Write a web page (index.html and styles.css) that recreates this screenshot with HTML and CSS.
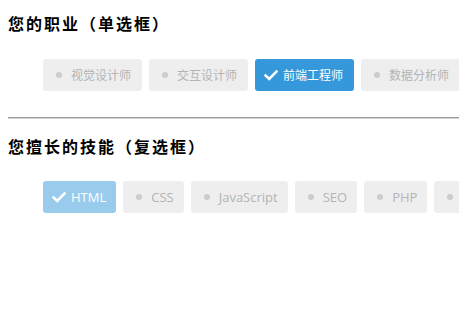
FILE: index.html
```html
<!DOCTYPE html>
<html lang="zh-CN">
<head>
<meta charset="utf-8">
<title>选择</title>
<link rel="stylesheet" href="styles.css">
</head>
<body>
<h4 class="title">您的职业（单选框）</h4>
<div class="opts">
  <span class="opt"><i class="dot"></i><span>视觉设计师</span></span>
  <span class="opt"><i class="dot"></i><span>交互设计师</span></span>
  <span class="opt on"><svg class="chk" viewBox="0 0 14 12"><path d="M1.5 6.5 L5.2 10 L12.5 2.5" fill="none" stroke="#fff" stroke-width="2.6" stroke-linecap="square" stroke-linejoin="miter"/></svg><span>前端工程师</span></span>
  <span class="opt"><i class="dot"></i><span>数据分析师</span></span>
</div>
<hr class="sep">
<h4 class="title t2">您擅长的技能（复选框）</h4>
<div class="opts r2">
  <span class="opt on dis"><svg class="chk" viewBox="0 0 14 12"><path d="M1.5 6.5 L5.2 10 L12.5 2.5" fill="none" stroke="#fff" stroke-width="2.6" stroke-linecap="square" stroke-linejoin="miter"/></svg><span>HTML</span></span>
  <span class="opt"><i class="dot"></i><span>CSS</span></span>
  <span class="opt"><i class="dot"></i><span>JavaScript</span></span>
  <span class="opt"><i class="dot"></i><span>SEO</span></span>
  <span class="opt"><i class="dot"></i><span>PHP</span></span>
  <span class="opt"><i class="dot"></i><span>Java</span></span>
</div>
</body>
</html>
```
FILE: styles.css
```css
html, body {
  overflow: hidden;
}
body {
  margin: 8px;
  background: #fff;
  font-family: "Open Sans", "Noto Sans CJK SC", sans-serif;
}
.title {
  margin: 3px 0 0;
  font-size: 16px;
  line-height: 24px;
  font-weight: bold;
  letter-spacing: 2px;
  color: #000;
  font-family: "Noto Sans CJK SC", sans-serif;
}
.t2 {
  margin-top: 15px;
}
.opts {
  display: flex;
  flex-wrap: nowrap;
  gap: 7px;
  margin-top: 24px;
  padding-left: 35px;
}
.r2 {
  margin-top: 23px;
}
.opt {
  flex: none;
  display: flex;
  align-items: center;
  height: 32px;
  padding: 0 11px 0 9px;
  background: #eeeeee;
  border-radius: 3px;
  color: #b4b4b4;
  font-size: 12px;
  font-family: "Open Sans", "Noto Sans CJK SC", sans-serif;
  white-space: nowrap;
}
.r2 .opt {
  font-size: 13px;
  padding-right: 10px;
}
.dot {
  width: 14px;
  height: 6px;
  margin-right: 5px;
  display: flex;
  justify-content: center;
}
.dot::before {
  content: "";
  width: 6px;
  height: 6px;
  border-radius: 50%;
  background: #cccccc;
}
.chk {
  width: 14px;
  height: 12px;
  margin-right: 5px;
  flex: none;
}
.on {
  background: #3498db;
  color: #fff;
}
.dis {
  background: #99cbed;
}
.sep {
  margin: 26px -8px 0 0;
  border: 0;
  border-top: 1px solid #9a9a9a;
  border-bottom: 1px solid #d6d6d6;
  height: 0;
}
```
